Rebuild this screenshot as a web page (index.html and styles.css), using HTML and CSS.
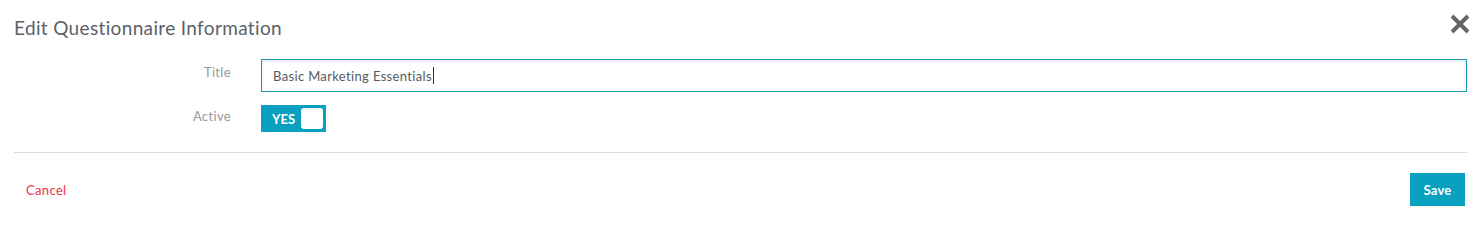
FILE: index.html
```html
<!DOCTYPE html>
<html>
<head>
<meta charset="utf-8">
<link rel="stylesheet" href="styles.css">
</head>
<body>
<div class="modal">
  <div class="header">
    <h1 class="title">Edit Questionnaire Information</h1>
    <button class="close" aria-label="Close">
      <svg width="20" height="20" viewBox="0 0 20 20"><path d="M2 2 L18 18 M18 2 L2 18" stroke="#666" stroke-width="4" stroke-linecap="butt"/></svg>
    </button>
  </div>
  <div class="body">
    <div class="row row-title">
      <label class="label">Title</label>
      <div class="input">Basic Marketing Essentials<span class="caret"></span></div>
    </div>
    <div class="row row-active">
      <label class="label">Active</label>
      <div class="toggle"><span class="toggle-text">YES</span><span class="knob"></span></div>
    </div>
  </div>
  <hr class="divider">
  <div class="footer">
    <a class="cancel">Cancel</a>
    <button class="save">Save</button>
  </div>
</div>
</body>
</html>
```
FILE: styles.css
```css
* { box-sizing: border-box; }
body {
  margin: 0;
  background: #fff;
  font-family: Lato, "Noto Sans", sans-serif;
  letter-spacing: 0.35px;
}
.modal {
  padding: 0 11px 0 14px;
}
.header {
  display: flex;
  justify-content: space-between;
  align-items: flex-start;
  height: 59px;
}
.title {
  margin: 16px 0 0 0;
  font-size: 19px;
  font-weight: 400;
  color: #5b616b;
  line-height: 24px;
}
.close {
  margin: 14px -3px 0 0;
  padding: 0;
  border: 0;
  background: none;
  width: 20px;
  height: 20px;
  display: block;
}
.close svg { display: block; }
.row {
  display: flex;
  align-items: center;
}
.label {
  width: 217px;
  text-align: right;
  font-size: 13px;
  color: #9a9a9a;
}
.row-title .label { align-self: flex-start; margin-top: 5px; }
.row-active .label { align-self: flex-start; margin-top: 3px; }
.input {
  margin-left: 30px;
  flex: 1;
  height: 33px;
  border: 1px solid #1a97b0;
  box-shadow: inset 0 2px 3px rgba(0,0,0,0.08);
  padding: 0 11px;
  font-size: 13px;
  color: #555a62;
  display: flex;
  align-items: center;
}
.caret {
  display: inline-block;
  width: 1px;
  height: 17px;
  background: #333;
  margin-left: 1px;
}
.row-active { margin-top: 13px; }
.toggle {
  margin-left: 30px;
  width: 65px;
  height: 27px;
  background: #0aa0c0;
  display: flex;
  align-items: center;
  padding: 0 3px 0 11px;
}
.toggle-text {
  color: #fff;
  font-size: 13px;
  font-weight: 700;
  flex: 1;
  letter-spacing: 0;
}
.knob {
  width: 22px;
  height: 21px;
  background: #fff;
  border-radius: 3px;
}
.divider {
  margin: 20px 0 0 0;
  border: 0;
  border-top: 1px solid #dcdcdc;
  height: 0;
}
.footer {
  display: flex;
  justify-content: space-between;
  align-items: center;
  padding: 20px 2px 0 12px;
}
.cancel {
  font-size: 13px;
  color: #ee3344;
  cursor: pointer;
}
.save {
  width: 55px;
  height: 33px;
  border: 0;
  background: #0aa0c0;
  color: #fff;
  font-family: Lato, "Noto Sans", sans-serif;
  font-size: 13px;
  font-weight: 700;
  padding: 0;
  letter-spacing: 0.2px;
}
```
